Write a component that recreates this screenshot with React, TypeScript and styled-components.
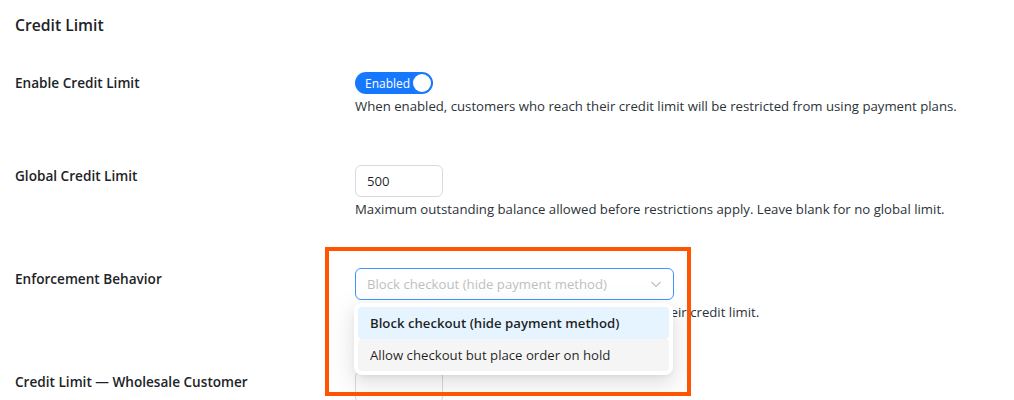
import styled, { createGlobalStyle } from 'styled-components';

const GlobalStyle = createGlobalStyle`
    body {
        margin: 0;
        background: #ffffff;
        font-family: 'Open Sans', 'Noto Sans', sans-serif;
        color: #1d2327;
    }
`;

export default function App() {
    return (
        <>
            <GlobalStyle />
            <Page>
                <Heading>Credit Limit</Heading>
                <Row>
                    <Label>Enable Credit Limit</Label>
                    <Field>
                        <Switch>
                            <span>Enabled</span>
                            <Knob />
                        </Switch>
                        <Description>
                            When enabled, customers who reach their credit limit will be
                            restricted from using payment plans.
                        </Description>
                    </Field>
                </Row>
                <Row>
                    <Label>Global Credit Limit</Label>
                    <Field>
                        <NumberInput $width={88}>500</NumberInput>
                        <Description>
                            Maximum outstanding balance allowed before restrictions apply.
                            Leave blank for no global limit.
                        </Description>
                    </Field>
                </Row>
                <Row>
                    <Label>Enforcement Behavior</Label>
                    <Field>
                        <SelectWrap>
                            <Select>
                                <span>Block checkout (hide payment method)</span>
                                <svg width="12" height="12" viewBox="0 0 12 12">
                                    <path
                                        d="M1.5 4 L6 8.5 L10.5 4"
                                        fill="none"
                                        stroke="#bfbfbf"
                                        strokeWidth="1.2"
                                    />
                                </svg>
                            </Select>
                            <Menu>
                                <Option $selected>Block checkout (hide payment method)</Option>
                                <Option $hovered>Allow checkout but place order on hold</Option>
                            </Menu>
                        </SelectWrap>
                        <Description>
                            Choose what happens when a customer exceeds their credit limit.
                        </Description>
                    </Field>
                </Row>
                <Row>
                    <Label>Credit Limit — Wholesale Customer</Label>
                    <Field>
                        <NumberInput $width={88} />
                    </Field>
                </Row>
                <Highlight />
            </Page>
        </>
    );
}

const Page = styled.div`
    position: relative;
    padding: 0 15px;
    height: 400px;
    overflow: hidden;
`;

const Heading = styled.h2`
    margin: 0 0 13px;
    padding-top: 15px;
    font-size: 15.7px;
    line-height: 20px;
    font-weight: 600;
`;

const Row = styled.div`
    display: grid;
    grid-template-columns: 340px 1fr;
    padding: 24px 0 25px;
`;

const Label = styled.div`
    padding-top: 1px;
    font-size: 13.6px;
    line-height: 20px;
    font-weight: 600;
`;

const Field = styled.div`
    display: flex;
    flex-direction: column;
    align-items: flex-start;
`;

const Description = styled.p`
    margin: 2px 0 0;
    font-size: 13.2px;
    line-height: 20px;
    color: #2c3338;
`;

const Switch = styled.div`
    display: flex;
    align-items: center;
    justify-content: space-between;
    box-sizing: border-box;
    width: 78px;
    height: 22px;
    padding: 0 2px 0 10px;
    border-radius: 11px;
    background: #1677ff;
    color: #ffffff;
    font-size: 12px;
`;

const Knob = styled.span`
    width: 18px;
    height: 18px;
    border-radius: 50%;
    background: #ffffff;
`;

const NumberInput = styled.div<{ $width: number }>`
    box-sizing: border-box;
    width: ${({ $width }) => $width}px;
    height: 32px;
    padding: 0 11px;
    border: 1px solid #d9d9d9;
    border-radius: 6px;
    font-size: 13.2px;
    line-height: 30px;
    color: rgba(0, 0, 0, 0.88);
`;

const SelectWrap = styled.div`
    position: relative;
`;

const Select = styled.div`
    display: flex;
    align-items: center;
    justify-content: space-between;
    box-sizing: border-box;
    width: 319px;
    height: 32px;
    padding: 0 11px;
    border: 1px solid #4096ff;
    border-radius: 6px;
    font-size: 13.2px;
    color: #bfbfbf;
`;

const Menu = styled.div`
    position: absolute;
    top: 35px;
    left: -1px;
    z-index: 2;
    box-sizing: border-box;
    width: 319px;
    padding: 4px;
    border-radius: 8px;
    background: #ffffff;
    box-shadow: 0 6px 16px 0 rgba(0, 0, 0, 0.08),
        0 3px 6px -4px rgba(0, 0, 0, 0.12), 0 9px 28px 8px rgba(0, 0, 0, 0.05);
`;

const Option = styled.div<{ $selected?: boolean; $hovered?: boolean }>`
    height: 32px;
    padding: 0 12px;
    border-radius: 4px;
    font-size: 13.2px;
    line-height: 32px;
    color: rgba(0, 0, 0, 0.88);
    font-weight: ${({ $selected }) => ($selected ? 600 : 400)};
    background: ${({ $selected, $hovered }) =>
        $selected ? '#e6f4ff' : $hovered ? 'rgba(0, 0, 0, 0.04)' : 'transparent'};
`;

const Highlight = styled.div`
    position: absolute;
    left: 325px;
    top: 247px;
    width: 366px;
    height: 149px;
    box-sizing: border-box;
    border: 4px solid #ff5500;
    z-index: 3;
    pointer-events: none;
`;
